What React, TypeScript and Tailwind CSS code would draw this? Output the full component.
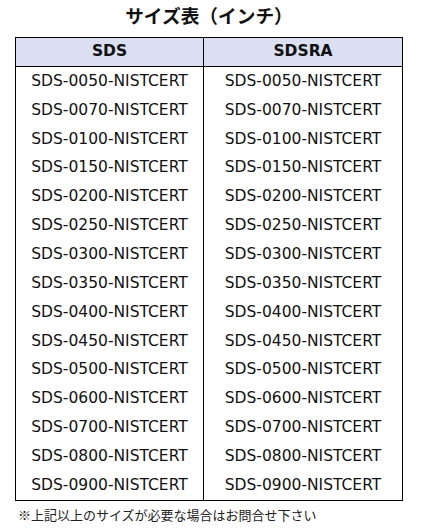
const codes = [
  "0050", "0070", "0100", "0150", "0200", "0250", "0300", "0350",
  "0400", "0450", "0500", "0600", "0700", "0800", "0900",
];

export default function App() {
  return (
    <div className="w-[418px] bg-white text-[#111] font-['DejaVu_Sans','Noto_Sans_CJK_JP',sans-serif]">
      <h2 className="h-[37px] pb-[7px] text-center text-[18.7px] font-bold leading-[30px] font-['Noto_Sans_CJK_JP',sans-serif]">
        サイズ表（インチ）
      </h2>
      <div className="ml-[15px] w-[388px] border border-black">
        <div className="grid grid-cols-[188px_198px] border-b border-black bg-[#dae0f2] text-[15.5px] font-bold">
          <div className="flex h-[28px] items-center justify-center border-r border-black">SDS</div>
          <div className="flex h-[28px] items-center justify-center">SDSRA</div>
        </div>
        {codes.map((c) => (
          <div key={c} className="grid grid-cols-[188px_198px] text-[15.5px]">
            <div className="flex h-[28.87px] items-center justify-center border-r border-black">
              SDS-{c}-NISTCERT
            </div>
            <div className="flex h-[28.87px] items-center justify-center">SDS-{c}-NISTCERT</div>
          </div>
        ))}
      </div>
      <p className="pl-[18px] pt-[5px] text-[13px] leading-[18px] text-[#222] font-['Noto_Sans_CJK_JP',sans-serif]">
        ※上記以上のサイズが必要な場合はお問合せ下さい
      </p>
    </div>
  );
}
